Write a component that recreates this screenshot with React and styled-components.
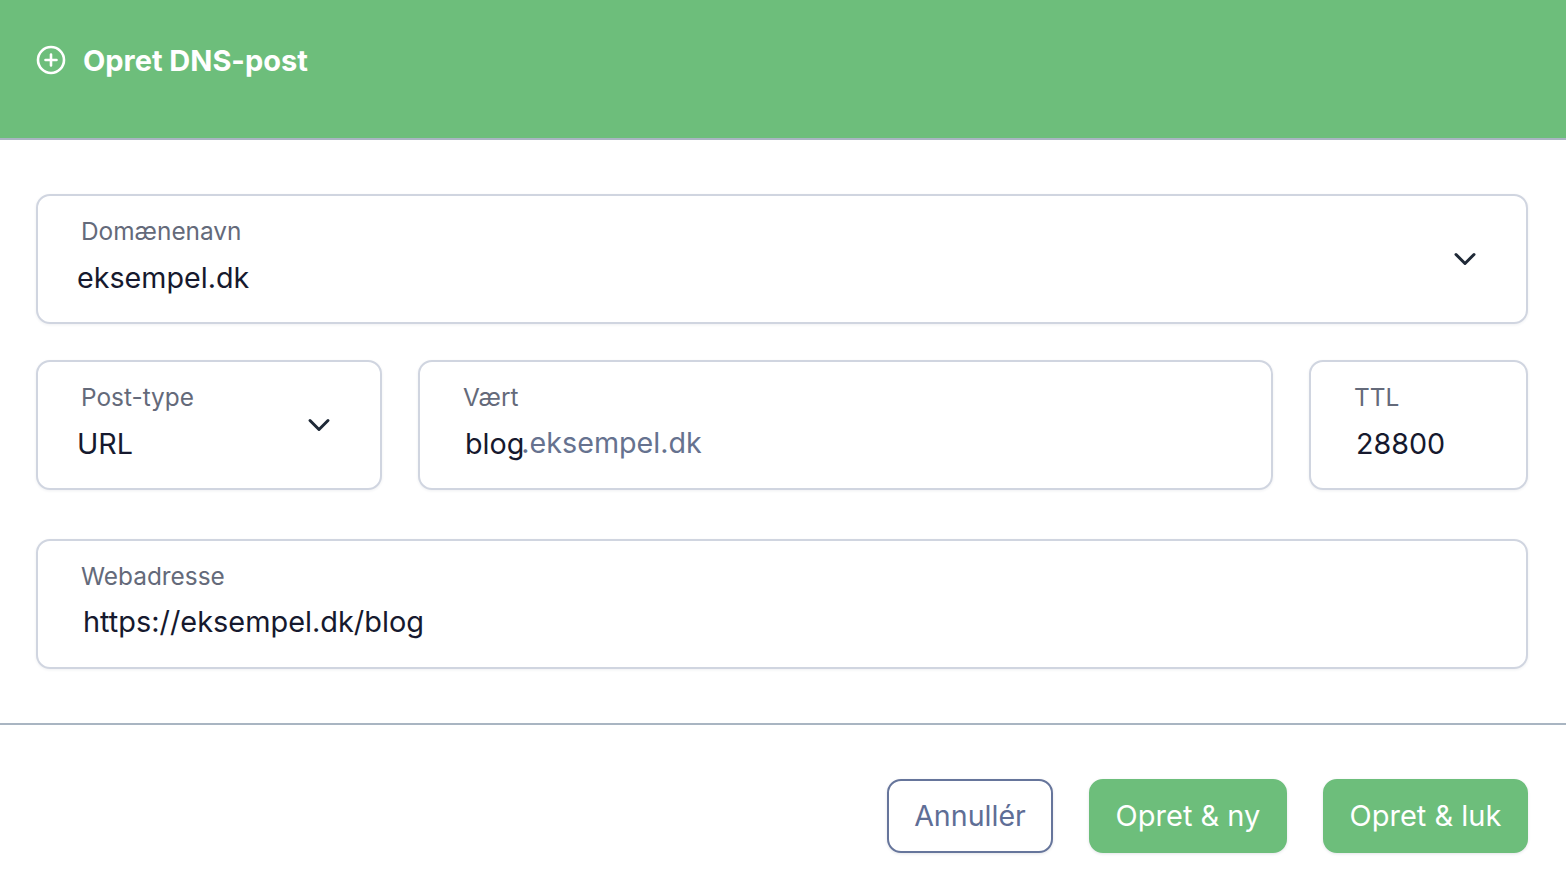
import React from "react";
import styled, { createGlobalStyle } from "styled-components";
import { ChevronDown } from "lucide-react";

const Global = createGlobalStyle`
  * { box-sizing: border-box; }
  body {
    margin: 0;
    background: #fff;
    font-family: Inter, "Liberation Sans", sans-serif;
  }
`;

const Page = styled.div`
  width: 1566px;
  height: 889px;
  overflow: hidden;
  display: flex;
  flex-direction: column;
`;

const Header = styled.header`
  height: 140px;
  flex: none;
  background: #6dbe7b;
  border-bottom: 2px solid #a9b5c2;
  padding: 45px 36px 0;
  display: flex;
  align-items: flex-start;
  gap: 17px;
`;

const Title = styled.h1`
  margin: -1px 0 0;
  font-size: 29px;
  line-height: 34px;
  font-weight: 700;
  letter-spacing: -0.02px;
  color: #fff;
`;

const Body = styled.div`
  height: 585px;
  flex: none;
  padding: 54px 38px 0 36px;
  border-bottom: 2px solid #a9b5c2;
  display: flex;
  flex-direction: column;
`;

const Row = styled.div`
  display: flex;
  gap: 36px;
  margin-bottom: ${(p) => p.$gap}px;
`;

const Field = styled.div`
  position: relative;
  flex: ${(p) => (p.$width ? `0 0 ${p.$width}px` : "1")};
  height: 130px;
  padding: 20px 0 0 ${(p) => p.$pad}px;
  background: #fff;
  border: 2px solid #d0d5e0;
  border-radius: 14px;
  box-shadow: 0 1px 3px rgba(30, 40, 70, 0.07);
`;

const Label = styled.div`
  font-size: 24.4px;
  line-height: 30px;
  color: #646a7a;
`;

const Value = styled.div`
  margin-top: ${(p) => p.$top}px;
  margin-left: ${(p) => p.$shift}px;
  font-size: ${(p) => p.$size || 28.7}px;
  line-height: 32px;
  color: #16192e;
`;

const Suffix = styled.span`
  margin-left: -3px;
  color: #66728f;
  position: relative;
  top: -1px;
`;

const Arrow = styled(ChevronDown)`
  position: absolute;
  top: 45px;
  right: ${(p) => p.$right}px;
  color: #1f2937;
`;

const Footer = styled.footer`
  display: flex;
  justify-content: flex-end;
  gap: 36px;
  padding: 54px 38px 0 0;
`;

const Button = styled.button`
  height: 74px;
  width: ${(p) => p.$width}px;
  padding: 0 0 2px;
  font-family: inherit;
  font-size: ${(p) => (p.$outline ? 28.6 : 29)}px;
  border-radius: 14px;
  border: 2px solid ${(p) => (p.$outline ? "#66759b" : "#6dbe7b")};
  background: ${(p) => (p.$outline ? "#fff" : "#6dbe7b")};
  color: ${(p) => (p.$outline ? "#5f6e96" : "#fff")};
  box-shadow: 0 1px 3px rgba(30, 40, 70, 0.12);
`;

const PlusCircle = () => (
  <svg width="30" height="30" viewBox="0 0 30 30" fill="none" stroke="#fff" strokeWidth="2.6" strokeLinecap="round">
    <circle cx="15" cy="15" r="13" />
    <path d="M15 9.5v11M9.5 15h11" />
  </svg>
);

export default function App() {
  return (
    <Page>
      <Global />
      <Header>
        <PlusCircle />
        <Title>Opret DNS-post</Title>
      </Header>
      <Body>
        <Row $gap={36}>
          <Field $pad={43}>
            <Label>Domænenavn</Label>
            <Value $shift={-4} $top={16}>eksempel.dk</Value>
            <Arrow size={36} strokeWidth={2} $right={43} />
          </Field>
        </Row>
        <Row $gap={49}>
          <Field $pad={43} $width={346}>
            <Label>Post-type</Label>
            <Value $shift={-4} $top={16}>URL</Value>
            <Arrow size={36} strokeWidth={2} $right={43} />
          </Field>
          <Field $pad={43}>
            <Label>Vært</Label>
            <Value $shift={2} $top={16}>
              blog<Suffix>.eksempel.dk</Suffix>
            </Value>
          </Field>
          <Field $pad={43} $width={219}>
            <Label>TTL</Label>
            <Value $shift={2} $top={16}>28800</Value>
          </Field>
        </Row>
        <Row $gap={0}>
          <Field $pad={43}>
            <Label>Webadresse</Label>
            <Value $shift={2} $top={15} $size={28.9}>https://eksempel.dk/blog</Value>
          </Field>
        </Row>
      </Body>
      <Footer>
        <Button $outline $width={166}>Annullér</Button>
        <Button $width={198}>Opret &amp; ny</Button>
        <Button $width={205}>Opret &amp; luk</Button>
      </Footer>
    </Page>
  );
}
